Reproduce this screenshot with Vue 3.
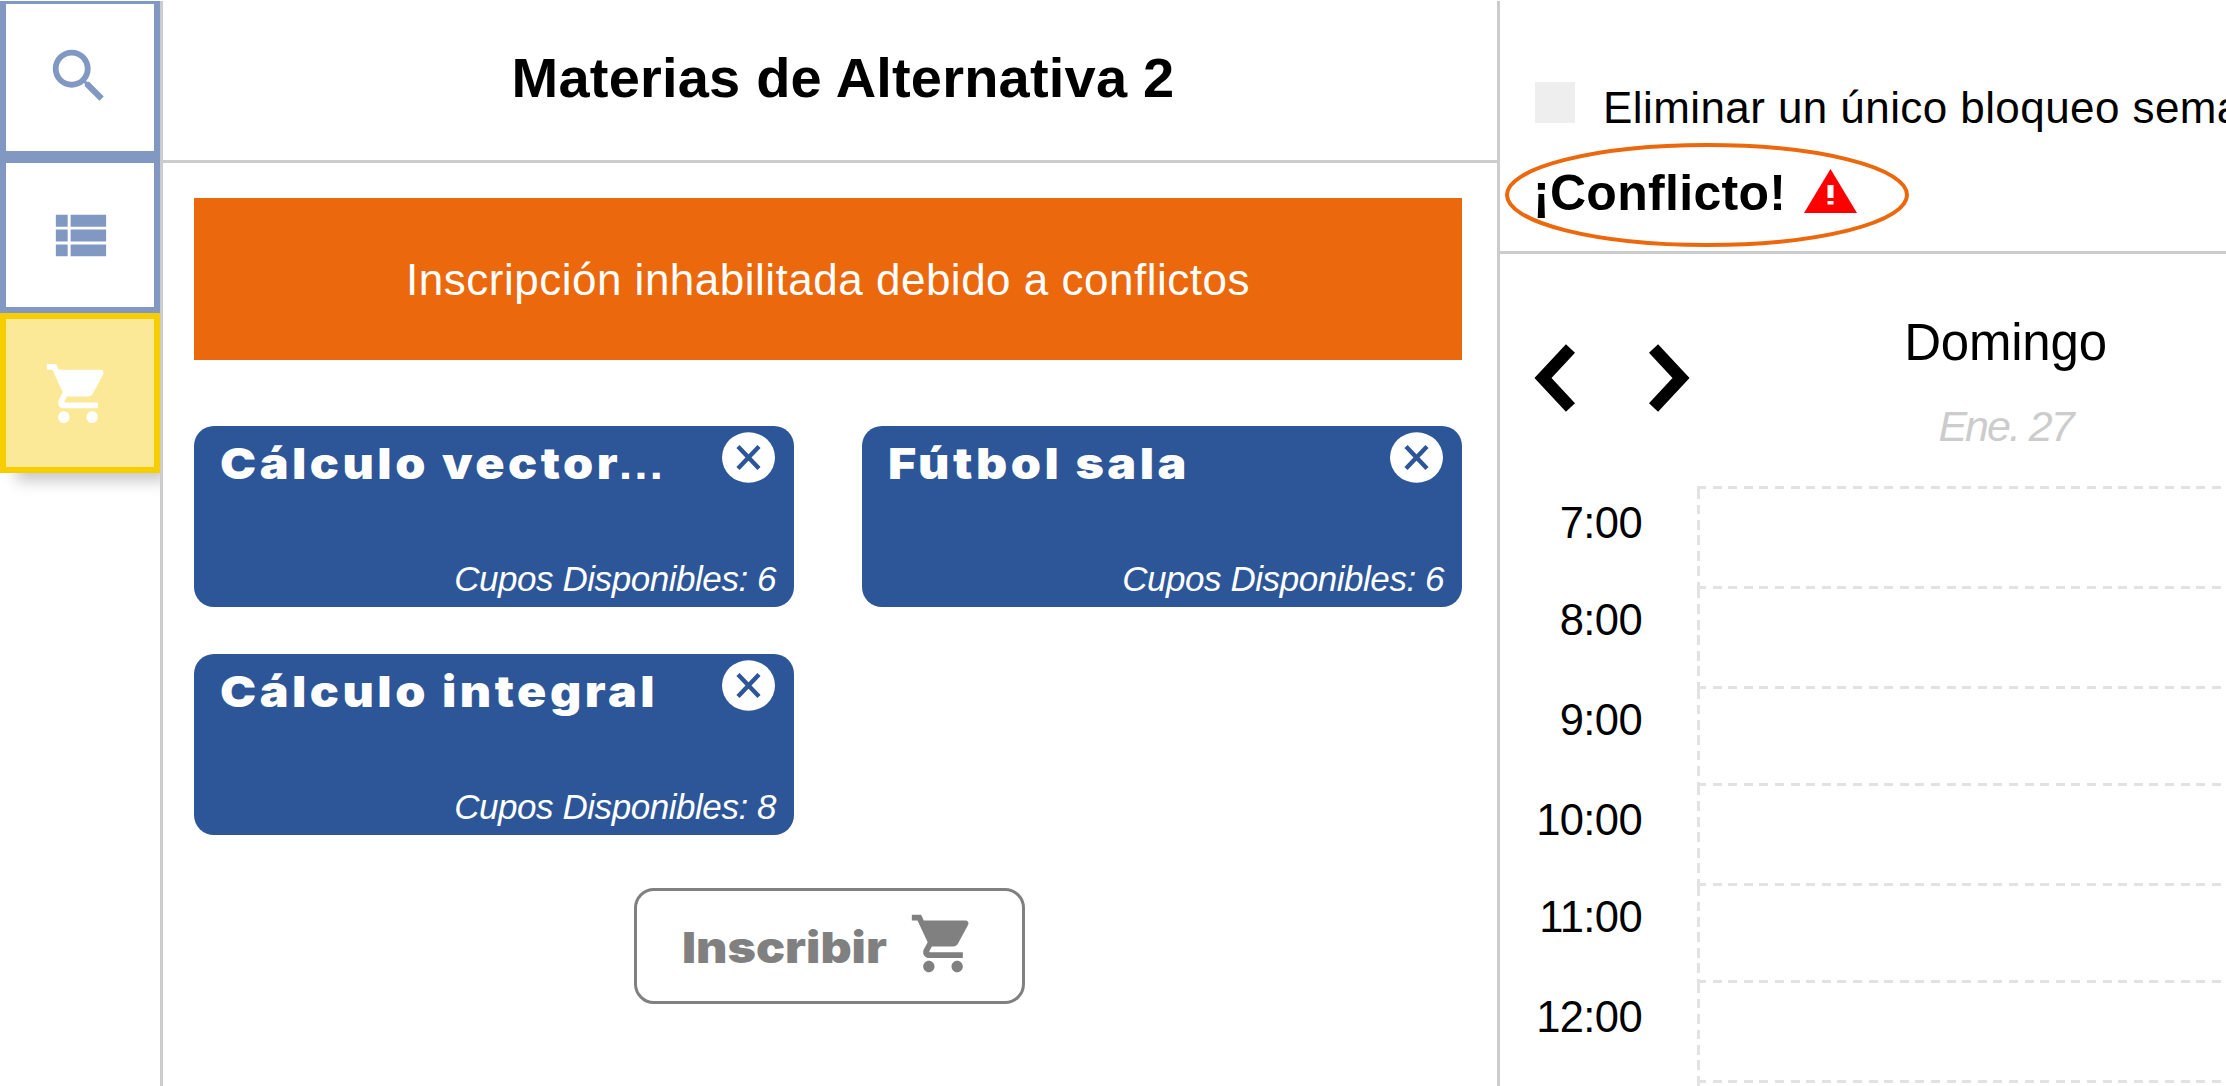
<script setup>
const CART =
  'M7 18c-1.1 0-1.99.9-1.99 2S5.9 22 7 22s2-.9 2-2-.9-2-2-2zM1 2v2h2l3.6 7.59-1.35 2.45c-.16.28-.25.61-.25.96 0 1.1.9 2 2 2h12v-2H7.42c-.14 0-.25-.11-.25-.25l.03-.12.9-1.63h7.45c.75 0 1.41-.41 1.75-1.03l3.58-6.49A1 1 0 0 0 20 4H5.21l-.94-2H1zm16 16c-1.1 0-1.99.9-1.99 2s.89 2 1.99 2 2-.9 2-2-.9-2-2-2z'

const courses = [
  { name: 'Cálculo vector', cut: true, seats: 6 },
  { name: 'Fútbol sala', cut: false, seats: 6 },
  { name: 'Cálculo integral', cut: false, seats: 8 },
]

const hours = [
  { label: '7:00', height: 100, top: 12 },
  { label: '8:00', height: 100, top: 9 },
  { label: '9:00', height: 97, top: 9 },
  { label: '10:00', height: 100, top: 12 },
  { label: '11:00', height: 97, top: 9 },
  { label: '12:00', height: 100, top: 12 },
  { label: '', height: 6, top: 0 },
]
</script>

<template>
  <div class="app">
    <nav class="rail">
      <button class="tab tab-search">
        <svg width="70" height="70" viewBox="0 0 24 24">
          <path d="M15.5 14h-.79l-.28-.27A6.471 6.471 0 0 0 16 9.5 6.5 6.5 0 1 0 9.5 16c1.61 0 3.09-.59 4.23-1.57l.27.28v.79l5 4.99L20.49 19l-4.99-5zm-6 0C7.01 14 5 11.99 5 9.5S7.01 5 9.5 5 14 7.01 14 9.5 11.99 14 9.5 14z" />
        </svg>
      </button>
      <button class="tab tab-list">
        <svg width="71" height="71" viewBox="0 0 24 24">
          <path d="M4 14h4v-4H4v4zm0 5h4v-4H4v4zM4 9h4V5H4v4zm5 5h12v-4H9v4zm0 5h12v-4H9v4zM9 5v4h12V5H9z" />
        </svg>
      </button>
      <button class="tab tab-cart">
        <svg width="68" height="71" viewBox="0 0 24 24" preserveAspectRatio="none">
          <path :d="CART" />
        </svg>
      </button>
    </nav>

    <section class="courses">
      <header class="courses-head">
        <h1>Materias de Alternativa 2</h1>
      </header>
      <div class="courses-body">
        <div class="banner"><span>Inscripción inhabilitada debido a conflictos</span></div>
        <div class="cards">
          <article v-for="c in courses" :key="c.name" class="card">
            <div class="card-top">
              <h2>{{ c.name }}<span v-if="c.cut" class="dots">…</span></h2>
              <svg class="close" width="54" height="51" viewBox="0 0 54 51">
                <ellipse cx="26.500" cy="25.5" rx="26.500" ry="25.3" fill="#fff" />
                <path d="M16 14.5 37 36.5M37 14.5 16 36.5" stroke="#2c5698" stroke-width="4.4" />
              </svg>
            </div>
            <p class="seats">Cupos Disponibles: {{ c.seats }}</p>
          </article>
        </div>
        <button class="enroll">
          <span>Inscribir</span>
          <svg width="68" height="69" viewBox="0 0 24 24" preserveAspectRatio="none">
            <path :d="CART" />
          </svg>
        </button>
      </div>
    </section>

    <section class="schedule">
      <header class="schedule-head">
        <label class="option">
          <i class="box"></i>
          <span>Eliminar un único bloqueo sema</span>
        </label>
        <div class="conflict">
          <strong>¡Conflicto!</strong>
          <svg width="53" height="44" viewBox="0 0 53 44">
            <path d="M26.5 0 53 44H0z" fill="#f00" />
            <path d="M23.5 16h6v13h-6zM23.500 32h6v3.500h-6z" fill="#fff" />
          </svg>
          <svg class="ring" width="404" height="104" viewBox="0 0 404 104">
            <ellipse cx="202" cy="52" rx="200" ry="50" fill="none" stroke="#ec680c" stroke-width="4" />
          </svg>
        </div>
      </header>
      <div class="week-head">
        <div class="arrows">
          <svg width="41" height="68" viewBox="0 0 41 68"><path d="M36.500 4.500 9 34 36.500 63.500" /></svg>
          <svg width="41" height="68" viewBox="0 0 41 68"><path d="M4.500 4.500 32 34 4.500 63.500" /></svg>
        </div>
        <div class="day">
          <span class="day-name">Domingo</span>
          <span class="day-date">Ene. 27</span>
        </div>
      </div>
      <div class="grid">
        <div v-for="(h, i) in hours" :key="i" class="hour" :style="{ height: h.height + 'px' }">
          <span class="hour-label" :style="{ paddingTop: h.top + 'px' }">{{ h.label }}</span>
          <div class="slot"></div>
        </div>
      </div>
    </section>
  </div>
</template>

<style>
body {
  background: #fff;
  overflow: hidden;
}
</style>

<style scoped>
.app {
  box-sizing: border-box;
  width: 2226px;
  height: 1086px;
  padding-top: 1px;
  display: flex;
  overflow: hidden;
  background: #fff;
  color: #000;
  font-family: 'Liberation Sans', Arial, sans-serif;
}
.app * {
  box-sizing: border-box;
}
h1, h2, p {
  margin: 0;
}
button {
  font: inherit;
  margin: 0;
  padding: 0;
}
svg {
  display: block;
  flex: none;
}

.rail {
  width: 160px;
  flex: none;
}
.tab {
  display: flex;
  align-items: center;
  justify-content: center;
  width: 160px;
  height: 156px;
  padding-right: 2px;
  border: 6px solid #8199c2;
  background: #fff;
  fill: #8199c2;
}
.tab-search {
  border-top-width: 3px;
  padding-bottom: 3px;
}
.tab-cart {
  height: 160px;
  padding-right: 4px;
  border-color: #f8cd00;
  background: #fce997;
  fill: #fff;
  box-shadow: 12px 12px 14px -4px rgba(0, 0, 0, 0.22);
  clip-path: inset(0 0 -30px 0);
}

.courses {
  width: 1337px;
  flex: none;
  border-left: 3px solid #ccc;
}
.courses-head {
  height: 162px;
  border-bottom: 3px solid #ccc;
  display: flex;
  justify-content: center;
}
h1 {
  margin-left: 26px;
  padding-top: 45px;
  font-size: 56px;
  line-height: 64px;
  white-space: nowrap;
  letter-spacing: 0.2px;
}
.courses-body {
  padding: 35px 35px 0 31px;
  display: flex;
  flex-direction: column;
}
.banner {
  height: 162px;
  background: #ec680c;
  color: #fff;
  display: flex;
  justify-content: center;
  font-size: 44px;
  line-height: 50px;
  letter-spacing: 0.5px;
  padding-top: 57px;
}
.cards {
  margin-top: 66px;
  display: grid;
  grid-template-columns: 600px 600px;
  column-gap: 68px;
  row-gap: 47px;
}
.card {
  height: 181px;
  border-radius: 20px;
  background: #2c5698;
  color: #fff;
  padding: 6px 18px 0 26px;
}
.card-top {
  display: flex;
  justify-content: space-between;
}
h2 {
  font: 900 43px/52px Inter, 'Liberation Sans', sans-serif;
  letter-spacing: 3.1px;
  padding-top: 5px;
  white-space: nowrap;
  transform: scaleX(1.125);
  transform-origin: 0 0;
}
.dots {
  font-family: 'Liberation Sans', sans-serif;
  letter-spacing: 0;
  margin-left: -4px;
  line-height: 1;
}
.seats {
  margin-top: 70px;
  text-align: right;
  font-size: 35px;
  line-height: 40px;
  letter-spacing: -0.45px;
  font-style: italic;
}
.enroll {
  margin: 53px 0 0 440px;
  width: 391px;
  height: 116px;
  border: 3px solid #808080;
  border-radius: 20px;
  background: #fff;
  color: #808080;
  fill: #808080;
  display: flex;
  padding-left: 45px;
}
.enroll span {
  font: 900 43px/52px Inter, 'Liberation Sans', sans-serif;
  width: 227px;
  text-align: left;
  padding-top: 30px;
  transform: scaleX(1.125);
  transform-origin: 0 0;
}
.enroll svg {
  margin-top: 18px;
}

.schedule {
  flex: 1;
  min-width: 0;
  border-left: 3px solid #ccc;
}
.schedule-head {
  height: 253px;
  border-bottom: 3px solid #ccc;
  padding: 75px 0 0 35px;
}
.option {
  display: flex;
  height: 50px;
}
.box {
  width: 40px;
  height: 41px;
  margin: 6px 28px 0 0;
  background: #eee;
  flex: none;
}
.option span {
  font-size: 44px;
  line-height: 50px;
  letter-spacing: 0.42px;
  white-space: nowrap;
  padding-top: 7px;
}
.conflict {
  position: relative;
  display: flex;
  margin-top: 39px;
  height: 56px;
}
.conflict strong {
  font-size: 50px;
  line-height: 56px;
  width: 271px;
  margin-left: -2px;
  letter-spacing: 0.3px;
}
.conflict svg:not(.ring) {
  margin-top: 4px;
}
.conflict .ring {
  position: absolute;
  left: -30px;
  top: -22px;
}
.week-head {
  display: flex;
  height: 232px;
}
.arrows {
  display: flex;
  width: 198px;
  flex: none;
  gap: 74px;
  padding: 90px 0 0 34px;
}
.arrows path {
  fill: none;
  stroke: #000;
  stroke-width: 12.5;
}
.day {
  width: 615px;
  flex: none;
  display: flex;
  flex-direction: column;
  align-items: center;
}
.day-name {
  margin-top: 60px;
  font-size: 51px;
  line-height: 58px;
  letter-spacing: -0.2px;
}
.day-date {
  margin-top: 29px;
  font-size: 43px;
  line-height: 50px;
  letter-spacing: -2px;
  font-style: italic;
  color: #ccc;
}
.hour {
  display: flex;
}
.hour-label {
  width: 142px;
  flex: none;
  text-align: right;
  font-size: 43.5px;
  line-height: 50px;
  letter-spacing: -0.6px;
  margin-right: 55px;
}
.slot {
  flex: 1;
  background:
    repeating-linear-gradient(90deg, #e2e2e2 0 9px, transparent 9px 15.6px) 0 0 / 100% 3px no-repeat,
    repeating-linear-gradient(180deg, #e2e2e2 0 9.5px, transparent 9.5px 15.5px) 0 3px / 3px 100% no-repeat;
}
</style>
